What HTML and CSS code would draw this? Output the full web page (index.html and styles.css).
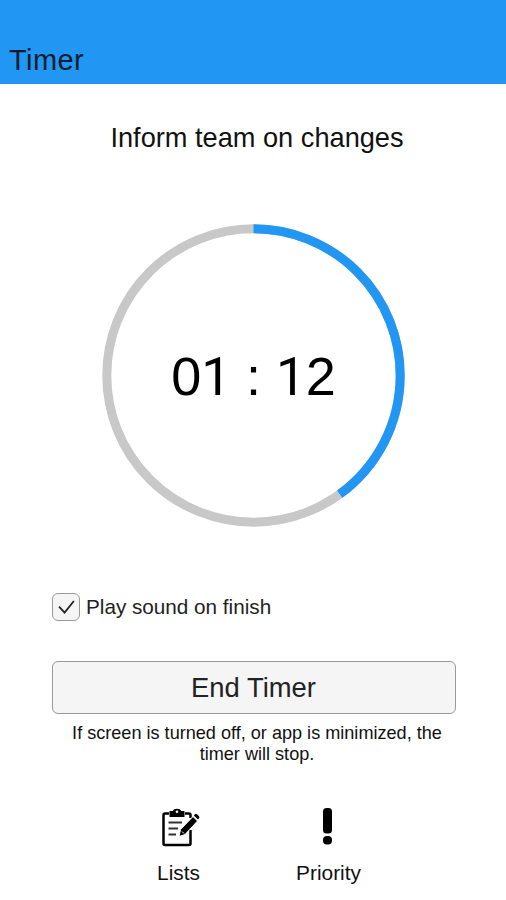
FILE: index.html
```html
<!DOCTYPE html>
<html lang="en">
<head>
<meta charset="utf-8">
<title>Timer</title>
<link rel="stylesheet" href="styles.css">
</head>
<body>
<header class="bar"><h1 class="bar-title">Timer</h1></header>
<main class="content">
  <h2 class="task">Inform team on changes</h2>
  <div class="dial">
    <svg class="ring" viewBox="0 0 304 304" aria-hidden="true">
      <circle class="track" cx="151.500" cy="152.500" r="146.700"/>
      <circle class="progress" cx="151.500" cy="152.500" r="146.700" pathLength="100" stroke-dasharray="40 60" transform="rotate(-90 151.500 152.500)"/>
    </svg>
    <div class="time">0<span class="one">1</span> : <span class="one">1</span>2</div>
  </div>
  <div class="option">
    <span class="checkbox"><svg viewBox="0 0 28 28"><path d="M6.500 13.500 12.500 20 22.500 7.500"/></svg></span>
    <span class="option-label">Play sound on finish</span>
  </div>
  <button class="end">End Timer</button>
  <p class="note">If screen is turned off, or app is minimized, the<br>timer will stop.</p>
  <nav class="nav">
    <a class="nav-item">
      <svg class="icon icon-lists" viewBox="0 0 40 40">
        <path class="outline" d="M9 5.500H5Q3.500 5.500 3.500 7V35.500Q3.500 37 5 37H29Q30.500 37 30.500 35.500V22M25 5.500H29Q30.500 5.500 30.500 7V10"/>
        <path d="M9.500 3H13Q13.500 0.800 17 0.800T21 3H24.500V9H9.500Z"/>
        <circle class="hole" cx="17" cy="3.800" r="1.300"/>
        <path class="lines" d="M8.500 14.500H22M8.500 20.500H18M8.500 26.500H16"/>
        <path class="pencil" d="M19 28.500 20.500 21.500 33 8.500 37.500 13 25 26.500Z"/>
        <path d="M33.800 7.500 35 6.200Q36 5.400 37 6.200L39 8.200Q39.800 9.200 39 10.200L38 11.500Z"/>
        <path class="shine" d="M22 23.500 24 25.500"/>
      </svg>
      <span>Lists</span>
    </a>
    <a class="nav-item">
      <svg class="icon" viewBox="0 0 40 40">
        <rect x="14" y="0" width="9" height="25.500" rx="3.500"/>
        <rect x="14" y="28" width="9" height="8.500" rx="4"/>
      </svg>
      <span>Priority</span>
    </a>
  </nav>
</main>
</body>
</html>
```
FILE: styles.css
```css
* { box-sizing: border-box; }
body {
  margin: 0;
  height: 900px;
  overflow: hidden;
  background: #fff;
  color: #111;
  font-family: "Liberation Sans", Arial, sans-serif;
}
h1, h2, p { margin: 0; font-weight: 400; }
.bar {
  height: 84px;
  padding: 43px 0 0 9px;
  background: #2196f3;
}
.bar-title { font-size: 29px; line-height: 35px; letter-spacing: 0.4px; color: #071c2c; }
.content { display: flex; flex-direction: column; align-items: center; }
.task {
  margin-top: 38px;
  font-size: 27.2px;
  line-height: 32px;
  padding-left: 8px;
  white-space: nowrap;
}
.dial {
  display: grid;
  place-items: center;
  width: 304px;
  height: 304px;
  margin-top: 69px;
  margin-left: 1px;
}
.ring, .time { grid-area: 1 / 1; }
.ring { width: 304px; height: 304px; }
.ring circle { fill: none; stroke-width: 9; }
.ring .track { stroke: #c8c8c8; }
.ring .progress { stroke: #2196f3; }
.time {
  padding-top: 2px;
  font-size: 54px;
  line-height: 60px;
  color: #000;
  white-space: pre;
}
.one { font-family: Roboto, sans-serif; font-size: 53px; }
.option {
  display: flex;
  align-items: center;
  gap: 6px;
  width: 402px;
  height: 28px;
  margin-top: 66px;
}
.checkbox {
  display: block;
  width: 28px;
  height: 28px;
  border: 1px solid #999;
  border-radius: 6px;
  background: #f5f5f5;
}
.checkbox svg { display: block; width: 26px; height: 26px; }
.checkbox path { fill: none; stroke: #222; stroke-width: 1.9; }
.option-label { font-size: 20.7px; line-height: 24px; color: #222; }
.end {
  width: 404px;
  height: 53px;
  margin-top: 40px;
  margin-left: 1px;
  padding: 0;
  border: 1px solid #999;
  border-radius: 6px;
  background: #f5f5f5;
  color: #222;
  font: 27.4px/32px "Liberation Sans", Arial, sans-serif;
}
.note {
  margin-top: 9px;
  padding-left: 8px;
  font-size: 18.1px;
  line-height: 21px;
  text-align: center;
  white-space: nowrap;
}
.nav { display: flex; gap: 50px; margin-top: 43px; margin-left: 1px; }
.nav-item {
  display: flex;
  flex-direction: column;
  align-items: center;
  width: 100px;
  font-size: 20.9px;
  line-height: 24px;
}
.icon { width: 40px; height: 40px; margin-bottom: 13px; fill: #000; }
.icon-lists { margin-left: 2px; }
.outline { fill: none; stroke: #000; stroke-width: 2.5; }
.lines { fill: none; stroke: #333; stroke-width: 2; }
.hole { fill: #fff; }
.pencil { stroke: #fff; stroke-width: 1; }
.shine { stroke: #fff; stroke-width: 1; }
```
